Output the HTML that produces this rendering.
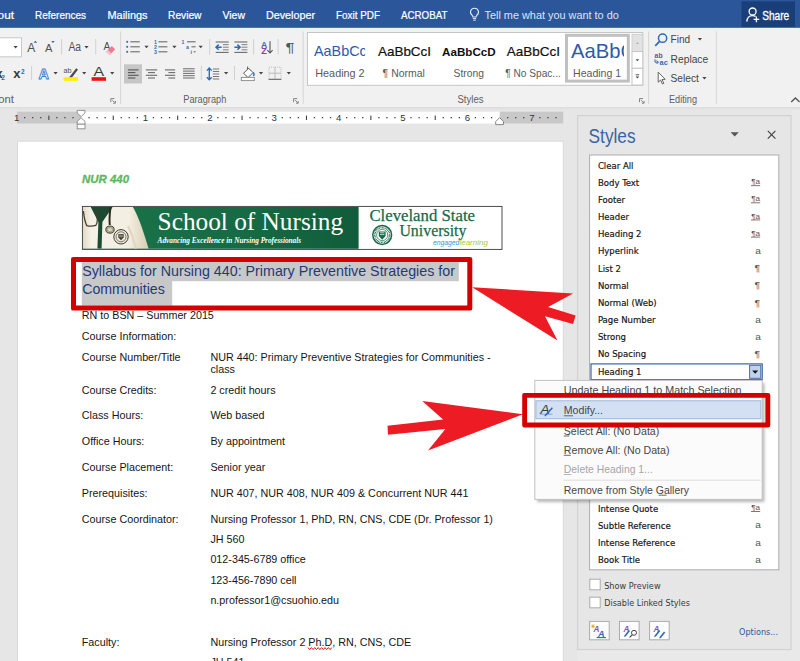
<!DOCTYPE html>
<html><head><meta charset="utf-8"><title>Word - Styles pane</title>
<style>
html,body{margin:0;padding:0;width:800px;height:661px;overflow:hidden;background:#e6e6e6}
svg{display:block;font-family:"Liberation Sans",sans-serif}
text{white-space:pre}
</style></head><body>
<svg width="800" height="661" viewBox="0 0 800 661">
<rect x="0.00" y="0.00" width="800.00" height="661.00" fill="#e6e6e6"/>
<rect x="0.00" y="0.00" width="800.00" height="27.90" fill="#2b579a"/>
<text x="-21.50" y="18.60" font-size="11.5" fill="#fff" textLength="35.50" lengthAdjust="spacingAndGlyphs" stroke="#fff" stroke-width="0.22">Layout</text>
<text x="35.00" y="18.60" font-size="11.5" fill="#fff" textLength="51.00" lengthAdjust="spacingAndGlyphs" stroke="#fff" stroke-width="0.22">References</text>
<text x="107.50" y="18.60" font-size="11.5" fill="#fff" textLength="40.00" lengthAdjust="spacingAndGlyphs" stroke="#fff" stroke-width="0.22">Mailings</text>
<text x="168.00" y="18.60" font-size="11.5" fill="#fff" textLength="33.50" lengthAdjust="spacingAndGlyphs" stroke="#fff" stroke-width="0.22">Review</text>
<text x="222.50" y="18.60" font-size="11.5" fill="#fff" textLength="22.50" lengthAdjust="spacingAndGlyphs" stroke="#fff" stroke-width="0.22">View</text>
<text x="266.00" y="18.60" font-size="11.5" fill="#fff" textLength="49.00" lengthAdjust="spacingAndGlyphs" stroke="#fff" stroke-width="0.22">Developer</text>
<text x="336.00" y="18.60" font-size="11.5" fill="#fff" textLength="44.00" lengthAdjust="spacingAndGlyphs" stroke="#fff" stroke-width="0.22">Foxit PDF</text>
<text x="401.00" y="18.60" font-size="11.5" fill="#fff" textLength="46.50" lengthAdjust="spacingAndGlyphs" stroke="#fff" stroke-width="0.22">ACROBAT</text>
<text x="484.50" y="18.70" font-size="11.5" fill="#dce5f3" textLength="134.30" lengthAdjust="spacingAndGlyphs">Tell me what you want to do</text>
<path d="M474.5 8.2a3.9 3.9 0 0 0-2.3 7.1c.5.5.7 1 .7 1.7h3.2c0-.7.2-1.2.7-1.7a3.9 3.9 0 0 0-2.3-7.1z" fill="none" stroke="#e6ecf6" stroke-width="1.1"/>
<path d="M472.9 18.6h3.2M473.3 20.2h2.4" fill="none" stroke="#e6ecf6" stroke-width="1"/>
<rect x="741.50" y="1.40" width="53.50" height="25.60" fill="#1a3f78"/>
<text x="762.20" y="20.20" font-size="12" fill="#fff" textLength="27.00" lengthAdjust="spacingAndGlyphs" stroke="#fff" stroke-width="0.3">Share</text>
<circle cx="752.6" cy="11.5" r="3.5" fill="none" stroke="#fff" stroke-width="1.3"/>
<path d="M746.8 21.6c.4-4 2.6-6 5.6-6 1.4 0 2.4.4 3.2 1" fill="none" stroke="#fff" stroke-width="1.3"/>
<path d="M756.4 16.6v5.6M753.6 19.4h5.6" fill="none" stroke="#fff" stroke-width="1.3"/>
<rect x="0.00" y="27.90" width="800.00" height="79.10" fill="#f1f1f1"/>
<linearGradient id="rs" x1="0" y1="0" x2="0" y2="1"><stop offset="0" stop-color="#dcdcdc"/><stop offset="1" stop-color="#e6e6e6"/></linearGradient>
<rect x="0.00" y="107.00" width="800.00" height="3.00" fill="url(#rs)"/>
<text x="-8.50" y="103.00" font-size="10" fill="#5f5f5f" textLength="22.50" lengthAdjust="spacingAndGlyphs">Font</text>
<text x="183.30" y="103.00" font-size="10" fill="#5f5f5f" textLength="43.00" lengthAdjust="spacingAndGlyphs">Paragraph</text>
<text x="457.50" y="103.00" font-size="10" fill="#5f5f5f" textLength="26.00" lengthAdjust="spacingAndGlyphs">Styles</text>
<text x="669.00" y="103.40" font-size="10" fill="#5f5f5f" textLength="28.00" lengthAdjust="spacingAndGlyphs">Editing</text>
<rect x="120.10" y="31.50" width="1.00" height="72.50" fill="#d6d6d6"/>
<rect x="302.70" y="31.50" width="1.00" height="72.50" fill="#d6d6d6"/>
<rect x="648.10" y="31.50" width="1.00" height="72.50" fill="#d6d6d6"/>
<rect x="715.90" y="31.50" width="1.00" height="72.50" fill="#d6d6d6"/>
<path d="M110.8 102.2v-3.6h3.6" fill="none" stroke="#777" stroke-width="0.9"/>
<path d="M112.4 100.2l2.6 2.6M115.4 101.0v2.2h-2.2" fill="none" stroke="#777" stroke-width="0.9"/>
<path d="M293.6 102.2v-3.6h3.6" fill="none" stroke="#777" stroke-width="0.9"/>
<path d="M295.2 100.2l2.6 2.6M298.2 101.0v2.2h-2.2" fill="none" stroke="#777" stroke-width="0.9"/>
<path d="M639.5 102.2v-3.6h3.6" fill="none" stroke="#777" stroke-width="0.9"/>
<path d="M641.1 100.2l2.6 2.6M644.1 101.0v2.2h-2.2" fill="none" stroke="#777" stroke-width="0.9"/>
<path d="M791.2 102l4.2-4 4.2 4" fill="none" stroke="#555" stroke-width="1.4"/>
<rect x="-2.00" y="37.80" width="23.50" height="19.00" fill="#fff" stroke="#c8c8c8" stroke-width="1"/>
<path d="M13.50 46.00h4.20l-2.10 2.40z" fill="#444"/>
<text x="27.30" y="51.50" font-size="12" fill="#505050" textLength="8.00" lengthAdjust="spacingAndGlyphs">A</text>
<path d="M33.6 42.8l1.8-2 1.8 2z" fill="#2e6bb5"/>
<text x="45.00" y="51.70" font-size="10.5" fill="#505050" textLength="7.40" lengthAdjust="spacingAndGlyphs">A</text>
<path d="M51.2 41l1.8 2 1.8-2z" fill="#2e6bb5"/>
<rect x="61.10" y="39.00" width="1.00" height="15.50" fill="#d0d0d0"/>
<rect x="95.20" y="39.00" width="1.00" height="15.50" fill="#d0d0d0"/>
<text x="68.50" y="51.20" font-size="12" fill="#505050" textLength="12.60" lengthAdjust="spacingAndGlyphs">Aa</text>
<path d="M84.40 46.00h4.20l-2.10 2.40z" fill="#444"/>
<text x="103.60" y="49.60" font-size="10.5" fill="#505050" textLength="6.80" lengthAdjust="spacingAndGlyphs">A</text>
<path d="M106.2 51.8l5.6-5.8 3.4 3.2-5.6 5.8z" fill="#ee7b91"/>
<path d="M106.2 51.8l1.6-1.7 3.4 3.2-1.6 1.7z" fill="#f8c3cd"/>
<text x="-4.40" y="77.80" font-size="12.5" fill="#3a3a3a" font-weight="bold" textLength="7.20" lengthAdjust="spacingAndGlyphs">x</text>
<text x="1.20" y="79.80" font-size="6.5" fill="#2e6bb5" font-weight="bold">2</text>
<text x="13.30" y="77.80" font-size="12.5" fill="#3a3a3a" font-weight="bold" textLength="7.20" lengthAdjust="spacingAndGlyphs">x</text>
<text x="21.00" y="74.00" font-size="6.5" fill="#2e6bb5" font-weight="bold">2</text>
<rect x="31.10" y="66.00" width="1.00" height="14.00" fill="#d0d0d0"/>
<text x="38.60" y="79.20" font-size="15.5" fill="#fff" font-weight="bold" textLength="10.40" lengthAdjust="spacingAndGlyphs" stroke="#3f7fd0" stroke-width="1" stroke-linejoin="round">A</text>
<path d="M53.50 72.10h4.20l-2.10 2.40z" fill="#444"/>
<text x="63.50" y="73.20" font-size="8" fill="#505050" textLength="8.00" lengthAdjust="spacingAndGlyphs">ab</text>
<path d="M69.8 76.6l6.4-8.4 1.8 1.3-6.2 8.3-2.6 .6z" fill="#4a4a4a"/>
<rect x="63.60" y="77.20" width="14.40" height="3.60" fill="#ffee00"/>
<path d="M82.10 72.10h4.20l-2.10 2.40z" fill="#444"/>
<text x="93.40" y="75.70" font-size="12.5" fill="#3a3a3a" textLength="10.60" lengthAdjust="spacingAndGlyphs">A</text>
<rect x="91.60" y="77.20" width="14.40" height="3.60" fill="#ee1111"/>
<path d="M110.10 72.10h4.20l-2.10 2.40z" fill="#444"/>
<rect x="126.30" y="40.90" width="1.80" height="1.80" fill="#2e6bb5"/>
<path d="M130.30 41.80H139.80" fill="none" stroke="#6a6a6a" stroke-width="1.1"/>
<text x="153.90" y="43.90" font-size="5.2" fill="#2e6bb5" font-weight="bold">1</text>
<path d="M158.40 41.80H167.40" fill="none" stroke="#6a6a6a" stroke-width="1.1"/>
<rect x="126.30" y="45.90" width="1.80" height="1.80" fill="#2e6bb5"/>
<path d="M130.30 46.80H139.80" fill="none" stroke="#6a6a6a" stroke-width="1.1"/>
<text x="153.90" y="48.90" font-size="5.2" fill="#2e6bb5" font-weight="bold">2</text>
<path d="M158.40 46.80H167.40" fill="none" stroke="#6a6a6a" stroke-width="1.1"/>
<rect x="126.30" y="50.90" width="1.80" height="1.80" fill="#2e6bb5"/>
<path d="M130.30 51.80H139.80" fill="none" stroke="#6a6a6a" stroke-width="1.1"/>
<text x="153.90" y="53.90" font-size="5.2" fill="#2e6bb5" font-weight="bold">3</text>
<path d="M158.40 51.80H167.40" fill="none" stroke="#6a6a6a" stroke-width="1.1"/>
<path d="M144.40 45.80h4.20l-2.10 2.40z" fill="#444"/>
<path d="M172.30 45.80h4.20l-2.10 2.40z" fill="#444"/>
<path d="M198.60 45.80h4.20l-2.10 2.40z" fill="#444"/>
<text x="181.60" y="43.60" font-size="5.2" fill="#2e6bb5" font-weight="bold">1</text>
<path d="M187.00 41.80H195.60" fill="none" stroke="#6a6a6a" stroke-width="1.1"/>
<text x="186.00" y="48.80" font-size="5.2" fill="#2e6bb5" font-weight="bold">a</text>
<path d="M191.50 46.80H195.60" fill="none" stroke="#6a6a6a" stroke-width="1.1"/>
<text x="190.40" y="53.60" font-size="5.2" fill="#2e6bb5" font-weight="bold">i</text>
<path d="M193.60 51.80H195.60" fill="none" stroke="#6a6a6a" stroke-width="1.1"/>
<rect x="209.20" y="39.00" width="1.00" height="15.50" fill="#d0d0d0"/>
<path d="M215.70 42.00H228.70" fill="none" stroke="#6a6a6a" stroke-width="1.1"/>
<path d="M222.90 44.60H228.70" fill="none" stroke="#8a8a8a" stroke-width="1.1"/>
<path d="M222.90 47.20H228.70" fill="none" stroke="#8a8a8a" stroke-width="1.1"/>
<path d="M222.90 49.80H228.70" fill="none" stroke="#8a8a8a" stroke-width="1.1"/>
<path d="M215.70 52.40H228.70" fill="none" stroke="#6a6a6a" stroke-width="1.1"/>
<path d="M221.7 47.2h-5.6M218.7 44.6l-2.7 2.6 2.7 2.6" fill="none" stroke="#2e6bb5" stroke-width="1.5"/>
<path d="M234.40 42.00H247.40" fill="none" stroke="#6a6a6a" stroke-width="1.1"/>
<path d="M241.60 44.60H247.40" fill="none" stroke="#8a8a8a" stroke-width="1.1"/>
<path d="M241.60 47.20H247.40" fill="none" stroke="#8a8a8a" stroke-width="1.1"/>
<path d="M241.60 49.80H247.40" fill="none" stroke="#8a8a8a" stroke-width="1.1"/>
<path d="M234.40 52.40H247.40" fill="none" stroke="#6a6a6a" stroke-width="1.1"/>
<path d="M234.4 47.2h5.6M237.4 44.6l2.7 2.6-2.7 2.6" fill="none" stroke="#2e6bb5" stroke-width="1.5"/>
<rect x="253.10" y="39.00" width="1.00" height="15.50" fill="#d0d0d0"/>
<text x="261.00" y="47.50" font-size="8.2" fill="#2e6bb5" font-weight="bold" textLength="6.20" lengthAdjust="spacingAndGlyphs">A</text>
<text x="261.20" y="53.80" font-size="8.2" fill="#8a3fa8" font-weight="bold" textLength="5.60" lengthAdjust="spacingAndGlyphs">Z</text>
<path d="M270 41.2v11.6M267.4 50.2l2.6 2.8 2.6-2.8" fill="none" stroke="#555" stroke-width="1.1"/>
<rect x="277.60" y="39.00" width="1.00" height="15.50" fill="#d0d0d0"/>
<text x="285.60" y="52.20" font-size="13" fill="#555" textLength="9.00" lengthAdjust="spacingAndGlyphs">¶</text>
<rect x="124.00" y="64.30" width="18.00" height="19.20" fill="#c6c6c6"/>
<path d="M128.00 69.90H138.60" fill="none" stroke="#555" stroke-width="1.1"/>
<path d="M145.80 69.90H157.20" fill="none" stroke="#6a6a6a" stroke-width="1.1"/>
<path d="M165.00 69.90H175.20" fill="none" stroke="#6a6a6a" stroke-width="1.1"/>
<path d="M128.00 72.60H135.40" fill="none" stroke="#555" stroke-width="1.1"/>
<path d="M148.00 72.60H155.00" fill="none" stroke="#6a6a6a" stroke-width="1.1"/>
<path d="M168.40 72.60H175.20" fill="none" stroke="#6a6a6a" stroke-width="1.1"/>
<path d="M128.00 75.30H138.60" fill="none" stroke="#555" stroke-width="1.1"/>
<path d="M145.80 75.30H157.20" fill="none" stroke="#6a6a6a" stroke-width="1.1"/>
<path d="M165.00 75.30H175.20" fill="none" stroke="#6a6a6a" stroke-width="1.1"/>
<path d="M128.00 78.00H135.40" fill="none" stroke="#555" stroke-width="1.1"/>
<path d="M148.00 78.00H155.00" fill="none" stroke="#6a6a6a" stroke-width="1.1"/>
<path d="M168.40 78.00H175.20" fill="none" stroke="#6a6a6a" stroke-width="1.1"/>
<path d="M183.00 68.80H194.70" fill="none" stroke="#6a6a6a" stroke-width="1"/>
<path d="M183.00 71.10H194.70" fill="none" stroke="#6a6a6a" stroke-width="1"/>
<path d="M183.00 73.40H194.70" fill="none" stroke="#6a6a6a" stroke-width="1"/>
<path d="M183.00 75.70H194.70" fill="none" stroke="#6a6a6a" stroke-width="1"/>
<path d="M183.00 78.00H194.70" fill="none" stroke="#6a6a6a" stroke-width="1"/>
<rect x="200.80" y="66.00" width="1.00" height="14.00" fill="#d0d0d0"/>
<path d="M209.3 68.2v11.4M206.9 70.6l2.4-2.6 2.4 2.6M206.9 77.2l2.4 2.6 2.4-2.6" fill="none" stroke="#2e6bb5" stroke-width="1.4"/>
<path d="M212.80 69.00H219.20" fill="none" stroke="#777" stroke-width="1"/>
<path d="M212.80 71.50H219.20" fill="none" stroke="#777" stroke-width="1"/>
<path d="M212.80 74.00H219.20" fill="none" stroke="#777" stroke-width="1"/>
<path d="M212.80 76.50H219.20" fill="none" stroke="#777" stroke-width="1"/>
<path d="M212.80 79.00H219.20" fill="none" stroke="#777" stroke-width="1"/>
<path d="M224.00 72.10h4.20l-2.10 2.40z" fill="#444"/>
<rect x="234.00" y="66.00" width="1.00" height="14.00" fill="#d0d0d0"/>
<path d="M243.6 73.2l5-5 4.4 4.4-5 5z" fill="#fff" stroke="#555" stroke-width="1"/>
<path d="M247.6 69.2v-2.6" fill="none" stroke="#555" stroke-width="1"/>
<path d="M253.2 72.4c1 1.4 1.2 2.6.2 3.6" fill="none" stroke="#2e6bb5" stroke-width="1.4"/>
<rect x="241.30" y="77.40" width="13.00" height="3.20" fill="#fff" stroke="#8a8a8a" stroke-width="0.9"/>
<path d="M258.90 72.10h4.20l-2.10 2.40z" fill="#444"/>
<rect x="269.00" y="67.20" width="12.00" height="12.00" fill="none" stroke="#b5b5b5" stroke-width="0.9" stroke-dasharray="1 1"/>
<path d="M275 67.2v12M269 73.2h12" fill="none" stroke="#b5b5b5" stroke-width="0.9"/>
<path d="M268.60 79.40H281.40" fill="none" stroke="#777" stroke-width="1.2"/>
<path d="M286.70 72.10h4.20l-2.10 2.40z" fill="#444"/>
<rect x="307.50" y="32.50" width="335.20" height="52.80" fill="#fff" stroke="#c6c6c6" stroke-width="1"/>
<clipPath id="c1"><rect x="310" y="34" width="55.2" height="30"/></clipPath>
<text x="314.00" y="56.20" font-size="14.4" fill="#2e5ba8" clip-path="url(#c1)">AaBbCc</text>
<text x="315.30" y="77.00" font-size="11" fill="#5a5a5a" textLength="49.30" lengthAdjust="spacingAndGlyphs">Heading 2</text>
<text x="378.00" y="56.20" font-size="12.7" fill="#111" textLength="53.00" lengthAdjust="spacingAndGlyphs" stroke="#111" stroke-width="0.2">AaBbCcI</text>
<text x="382.60" y="77.00" font-size="11" fill="#5a5a5a" textLength="42.30" lengthAdjust="spacingAndGlyphs">¶ Normal</text>
<text x="442.10" y="56.20" font-size="11.6" fill="#111" font-weight="bold" textLength="53.50" lengthAdjust="spacingAndGlyphs">AaBbCcD</text>
<text x="453.60" y="77.00" font-size="11" fill="#5a5a5a" textLength="30.40" lengthAdjust="spacingAndGlyphs">Strong</text>
<text x="506.80" y="56.20" font-size="12.7" fill="#111" textLength="53.20" lengthAdjust="spacingAndGlyphs" stroke="#111" stroke-width="0.2">AaBbCcI</text>
<text x="505.30" y="77.00" font-size="11" fill="#5a5a5a" textLength="55.50" lengthAdjust="spacingAndGlyphs">¶ No Spac...</text>
<rect x="566.50" y="35.30" width="61.80" height="45.80" fill="#fff" stroke="#c0c0c0" stroke-width="3"/>
<clipPath id="c2"><rect x="568" y="36" width="56" height="30"/></clipPath>
<text x="571.00" y="58.30" font-size="20.2" fill="#2e5ba8" clip-path="url(#c2)">AaBbC</text>
<text x="573.00" y="77.00" font-size="11" fill="#5a5a5a" textLength="48.20" lengthAdjust="spacingAndGlyphs">Heading 1</text>
<rect x="632.00" y="34.30" width="10.80" height="17.30" fill="#e2e2e2" stroke="#d0d0d0" stroke-width="1"/>
<rect x="632.00" y="51.60" width="10.80" height="16.70" fill="#fff" stroke="#c6c6c6" stroke-width="1"/>
<rect x="632.00" y="68.30" width="10.80" height="16.70" fill="#fff" stroke="#c6c6c6" stroke-width="1"/>
<path d="M635.70 44.00h3.40l-1.70 -2.00z" fill="#b5b5b5"/>
<path d="M635.70 59.20h3.40l-1.70 2.00z" fill="#444"/>
<path d="M635.60 74.80H639.20" fill="none" stroke="#444" stroke-width="0.9"/>
<path d="M635.70 76.60h3.40l-1.70 2.00z" fill="#444"/>
<circle cx="662.6" cy="38.2" r="4.1" fill="none" stroke="#2e6bb5" stroke-width="1.5"/>
<path d="M659.6 41.4l-4.4 4.4" fill="none" stroke="#2e6bb5" stroke-width="1.7"/>
<text x="670.60" y="43.40" font-size="11.5" fill="#444" textLength="19.60" lengthAdjust="spacingAndGlyphs">Find</text>
<path d="M697.80 38.00h4.20l-2.10 2.40z" fill="#444"/>
<text x="654.60" y="57.60" font-size="7.4" fill="#8a3fa8" font-weight="bold" textLength="8.00" lengthAdjust="spacingAndGlyphs">ab</text>
<text x="659.60" y="65.00" font-size="7.4" fill="#2e6bb5" font-weight="bold" textLength="8.20" lengthAdjust="spacingAndGlyphs">ac</text>
<path d="M655 59.4v2.8h3.2M656.6 60.4l1.8 1.8-1.8 1.8" fill="none" stroke="#2e6bb5" stroke-width="1"/>
<text x="670.60" y="63.00" font-size="11.5" fill="#444" textLength="37.60" lengthAdjust="spacingAndGlyphs">Replace</text>
<path d="M658.2 72.2v10l2.4-2.2 1.8 4 1.4-.6-1.8-3.9 3.2-.2z" fill="#fff" stroke="#555" stroke-width="0.9"/>
<text x="670.60" y="82.20" font-size="11.5" fill="#444" textLength="28.20" lengthAdjust="spacingAndGlyphs">Select</text>
<path d="M702.30 77.00h4.20l-2.10 2.40z" fill="#444"/>
<rect x="17.00" y="111.70" width="64.00" height="11.80" fill="#c8c8c8"/>
<rect x="81.00" y="111.70" width="418.80" height="11.80" fill="#fff"/>
<rect x="499.80" y="111.70" width="63.40" height="11.80" fill="#c8c8c8"/>
<rect x="24.00" y="117.00" width="1.30" height="1.30" fill="#444"/>
<rect x="32.05" y="117.00" width="1.30" height="1.30" fill="#444"/>
<rect x="40.10" y="117.00" width="1.30" height="1.30" fill="#444"/>
<rect x="48.30" y="115.60" width="1.10" height="4.40" fill="#444"/>
<rect x="56.20" y="117.00" width="1.30" height="1.30" fill="#444"/>
<rect x="64.25" y="117.00" width="1.30" height="1.30" fill="#444"/>
<rect x="72.30" y="117.00" width="1.30" height="1.30" fill="#444"/>
<rect x="88.40" y="117.00" width="1.30" height="1.30" fill="#444"/>
<rect x="96.45" y="117.00" width="1.30" height="1.30" fill="#444"/>
<rect x="104.50" y="117.00" width="1.30" height="1.30" fill="#444"/>
<rect x="112.70" y="115.60" width="1.10" height="4.40" fill="#444"/>
<rect x="120.60" y="117.00" width="1.30" height="1.30" fill="#444"/>
<rect x="128.65" y="117.00" width="1.30" height="1.30" fill="#444"/>
<rect x="136.70" y="117.00" width="1.30" height="1.30" fill="#444"/>
<text x="145.40" y="121.20" font-size="9.6" fill="#333" text-anchor="middle">1</text>
<rect x="152.80" y="117.00" width="1.30" height="1.30" fill="#444"/>
<rect x="160.85" y="117.00" width="1.30" height="1.30" fill="#444"/>
<rect x="168.90" y="117.00" width="1.30" height="1.30" fill="#444"/>
<rect x="177.10" y="115.60" width="1.10" height="4.40" fill="#444"/>
<rect x="185.00" y="117.00" width="1.30" height="1.30" fill="#444"/>
<rect x="193.05" y="117.00" width="1.30" height="1.30" fill="#444"/>
<rect x="201.10" y="117.00" width="1.30" height="1.30" fill="#444"/>
<text x="209.80" y="121.20" font-size="9.6" fill="#333" text-anchor="middle">2</text>
<rect x="217.20" y="117.00" width="1.30" height="1.30" fill="#444"/>
<rect x="225.25" y="117.00" width="1.30" height="1.30" fill="#444"/>
<rect x="233.30" y="117.00" width="1.30" height="1.30" fill="#444"/>
<rect x="241.50" y="115.60" width="1.10" height="4.40" fill="#444"/>
<rect x="249.40" y="117.00" width="1.30" height="1.30" fill="#444"/>
<rect x="257.45" y="117.00" width="1.30" height="1.30" fill="#444"/>
<rect x="265.50" y="117.00" width="1.30" height="1.30" fill="#444"/>
<text x="274.20" y="121.20" font-size="9.6" fill="#333" text-anchor="middle">3</text>
<rect x="281.60" y="117.00" width="1.30" height="1.30" fill="#444"/>
<rect x="289.65" y="117.00" width="1.30" height="1.30" fill="#444"/>
<rect x="297.70" y="117.00" width="1.30" height="1.30" fill="#444"/>
<rect x="305.90" y="115.60" width="1.10" height="4.40" fill="#444"/>
<rect x="313.80" y="117.00" width="1.30" height="1.30" fill="#444"/>
<rect x="321.85" y="117.00" width="1.30" height="1.30" fill="#444"/>
<rect x="329.90" y="117.00" width="1.30" height="1.30" fill="#444"/>
<text x="338.60" y="121.20" font-size="9.6" fill="#333" text-anchor="middle">4</text>
<rect x="346.00" y="117.00" width="1.30" height="1.30" fill="#444"/>
<rect x="354.05" y="117.00" width="1.30" height="1.30" fill="#444"/>
<rect x="362.10" y="117.00" width="1.30" height="1.30" fill="#444"/>
<rect x="370.30" y="115.60" width="1.10" height="4.40" fill="#444"/>
<rect x="378.20" y="117.00" width="1.30" height="1.30" fill="#444"/>
<rect x="386.25" y="117.00" width="1.30" height="1.30" fill="#444"/>
<rect x="394.30" y="117.00" width="1.30" height="1.30" fill="#444"/>
<text x="403.00" y="121.20" font-size="9.6" fill="#333" text-anchor="middle">5</text>
<rect x="410.40" y="117.00" width="1.30" height="1.30" fill="#444"/>
<rect x="418.45" y="117.00" width="1.30" height="1.30" fill="#444"/>
<rect x="426.50" y="117.00" width="1.30" height="1.30" fill="#444"/>
<rect x="434.70" y="115.60" width="1.10" height="4.40" fill="#444"/>
<rect x="442.60" y="117.00" width="1.30" height="1.30" fill="#444"/>
<rect x="450.65" y="117.00" width="1.30" height="1.30" fill="#444"/>
<rect x="458.70" y="117.00" width="1.30" height="1.30" fill="#444"/>
<text x="467.40" y="121.20" font-size="9.6" fill="#333" text-anchor="middle">6</text>
<rect x="474.80" y="117.00" width="1.30" height="1.30" fill="#444"/>
<rect x="482.85" y="117.00" width="1.30" height="1.30" fill="#444"/>
<rect x="490.90" y="117.00" width="1.30" height="1.30" fill="#444"/>
<rect x="507.00" y="117.00" width="1.30" height="1.30" fill="#444"/>
<rect x="515.05" y="117.00" width="1.30" height="1.30" fill="#444"/>
<rect x="523.10" y="117.00" width="1.30" height="1.30" fill="#444"/>
<text x="531.80" y="121.20" font-size="9.6" fill="#333" text-anchor="middle">7</text>
<rect x="539.20" y="117.00" width="1.30" height="1.30" fill="#444"/>
<rect x="547.25" y="117.00" width="1.30" height="1.30" fill="#444"/>
<rect x="555.30" y="117.00" width="1.30" height="1.30" fill="#444"/>
<text x="16.60" y="121.20" font-size="9.6" fill="#333" text-anchor="middle">1</text>
<path d="M77.2 110.4h7.8v2.6l-3.9 3.6-3.9-3.6z" fill="#fff" stroke="#8a8a8a" stroke-width="0.9"/>
<path d="M77.2 124.2v-2.8l3.9-3.6 3.9 3.6v2.8z" fill="#fff" stroke="#8a8a8a" stroke-width="0.9"/>
<rect x="77.20" y="124.20" width="7.80" height="4.60" fill="#fff" stroke="#8a8a8a" stroke-width="0.9"/>
<path d="M495.7 124.6v-3l3.9-4 3.9 4v3z" fill="#fff" stroke="#7a7a7a" stroke-width="0.9"/>
<rect x="17.60" y="141.20" width="545.60" height="530.00" fill="#fff" stroke="#d4d4d4" stroke-width="0.8"/>
<text x="82.00" y="182.60" font-size="11.6" fill="#5cb85c" font-weight="bold" font-style="italic" textLength="47.00" lengthAdjust="spacingAndGlyphs" stroke="#5cb85c" stroke-width="0.3">NUR 440</text>
<rect x="82.40" y="206.40" width="419.60" height="43.00" fill="#fff" stroke="#3a3a3a" stroke-width="0.9"/>
<linearGradient id="bg1" x1="0" y1="0" x2="1" y2="0"><stop offset="0" stop-color="#1b7349"/><stop offset="0.6" stop-color="#166a44"/><stop offset="1" stop-color="#115c3a"/></linearGradient>
<rect x="83.00" y="207.00" width="275.60" height="41.80" fill="url(#bg1)"/>
<clipPath id="cb"><rect x="83" y="207" width="275.6" height="41.8"/></clipPath>
<g clip-path="url(#cb)">
<linearGradient id="ct" x1="0" y1="0" x2="1" y2="0"><stop offset="0" stop-color="#e4dac6"/><stop offset="0.12" stop-color="#f5f1e7"/><stop offset="0.7" stop-color="#f4efe3"/><stop offset="1" stop-color="#d8cbb0"/></linearGradient>
<path d="M83 207H132.9C137 214 141 224 144 234C146 240 147.6 245 148.6 248.8H83z" fill="url(#ct)"/>
<path d="M90.7 207H112.6L102.4 222L101.6 248.8H97.4L98.4 222z" fill="#1c4a33"/>
<path d="M128 226c3 6 6 14 8 22.8" fill="none" stroke="#e3d7c0" stroke-width="2.2"/>
<path d="M83.4 211c.6 6 1.6 11 3.4 14.6 3 .8 6.6 .6 9-.2 2-2.6 2-7 .6-13" fill="none" stroke="#4a3c2a" stroke-width="1.3"/>
<path d="M110.6 207c-1 6-1.4 12-.8 18" fill="none" stroke="#2e2a22" stroke-width="2"/>
<ellipse cx="110" cy="229.6" rx="4.2" ry="3.6" fill="#a9a58f" stroke="#4a4636" stroke-width="1"/>
<ellipse cx="110" cy="229.6" rx="2" ry="1.6" fill="#d9d6c6"/>
<circle cx="121" cy="236.8" r="7.2" fill="#efe9da" stroke="#3c3a30" stroke-width="1"/>
<circle cx="121" cy="236.8" r="5" fill="none" stroke="#4c4a3e" stroke-width="0.7"/>
<path d="M118.4 234h5.2v3.4l-2.6 2.8-2.6-2.8z" fill="#3c3a30"/>
<path d="M119.2 235.2h3.6M119.2 236.8h3.6" fill="none" stroke="#efe9da" stroke-width="0.6"/>
</g>
<text x="157.60" y="229.80" font-size="25.4" fill="#fff" font-family='"Liberation Serif",serif' textLength="185.50" lengthAdjust="spacingAndGlyphs">School of Nursing</text>
<text x="157.60" y="242.60" font-size="7.6" fill="#fff" font-family='"Liberation Serif",serif' font-weight="bold" font-style="italic" textLength="143.50" lengthAdjust="spacingAndGlyphs">Advancing Excellence in Nursing Professionals</text>
<text x="369.40" y="221.00" font-size="17.4" fill="#17694a" font-family='"Liberation Serif",serif' textLength="105.60" lengthAdjust="spacingAndGlyphs" stroke="#17694a" stroke-width="0.25">Cleveland State</text>
<text x="399.40" y="235.80" font-size="17.4" fill="#17694a" font-family='"Liberation Serif",serif' textLength="67.00" lengthAdjust="spacingAndGlyphs" stroke="#17694a" stroke-width="0.25">University</text>
<circle cx="382.2" cy="235" r="9.4" fill="#fff" stroke="#17694a" stroke-width="1.5"/>
<circle cx="382.2" cy="235" r="7.4" fill="none" stroke="#17694a" stroke-width="1.6" stroke-dasharray="0.8 0.7"/>
<circle cx="382.2" cy="235" r="5.6" fill="none" stroke="#17694a" stroke-width="0.7"/>
<path d="M378.8 231.4h6.8v4.6l-3.4 3.8-3.4-3.8z" fill="#17694a"/>
<path d="M380 232.8h4.4M380 234.6h4.4" fill="none" stroke="#fff" stroke-width="0.7"/>
<text x="433.00" y="245.20" font-size="7.6" fill="#2e9bd6" font-style="italic" textLength="26.40" lengthAdjust="spacingAndGlyphs">engaged</text>
<text x="459.40" y="245.20" font-size="7.6" fill="#a9cb2e" font-style="italic" textLength="28.60" lengthAdjust="spacingAndGlyphs">learning</text>
<rect x="81.80" y="262.00" width="377.00" height="19.20" fill="#c8c8c8"/>
<rect x="81.80" y="281.00" width="90.40" height="24.60" fill="#c8c8c8"/>
<text x="82.20" y="276.20" font-size="14.3" fill="#1f3a78" textLength="372.80" lengthAdjust="spacingAndGlyphs">Syllabus for Nursing 440: Primary Preventive Strategies for</text>
<text x="82.20" y="294.20" font-size="14.3" fill="#1f3a78" textLength="82.60" lengthAdjust="spacingAndGlyphs">Communities</text>
<text x="81.80" y="319.30" font-size="10.76" fill="#161616">RN to BSN – Summer 2015</text>
<text x="81.80" y="340.00" font-size="10.76" fill="#161616">Course Information:</text>
<text x="81.80" y="360.70" font-size="10.76" fill="#161616">Course Number/Title</text>
<text x="210.40" y="360.70" font-size="10.76" fill="#161616">NUR 440: Primary Preventive Strategies for Communities -</text>
<text x="210.40" y="373.00" font-size="10.76" fill="#161616">class</text>
<text x="81.80" y="393.50" font-size="10.76" fill="#161616">Course Credits:</text>
<text x="210.40" y="393.50" font-size="10.76" fill="#161616">2 credit hours</text>
<text x="81.80" y="419.00" font-size="10.76" fill="#161616">Class Hours:</text>
<text x="210.40" y="419.00" font-size="10.76" fill="#161616">Web based</text>
<text x="81.80" y="445.00" font-size="10.76" fill="#161616">Office Hours:</text>
<text x="210.40" y="445.00" font-size="10.76" fill="#161616">By appointment</text>
<text x="81.80" y="471.00" font-size="10.76" fill="#161616">Course Placement:</text>
<text x="210.40" y="471.00" font-size="10.76" fill="#161616">Senior year</text>
<text x="81.80" y="496.70" font-size="10.76" fill="#161616">Prerequisites:</text>
<text x="210.40" y="496.70" font-size="10.76" fill="#161616">NUR 407, NUR 408, NUR 409 &amp; Concurrent NUR 441</text>
<text x="81.80" y="522.50" font-size="10.76" fill="#161616">Course Coordinator:</text>
<text x="210.40" y="522.50" font-size="10.76" fill="#161616">Nursing Professor 1, PhD, RN, CNS, CDE (Dr. Professor 1)</text>
<text x="210.40" y="543.00" font-size="10.76" fill="#161616">JH 560</text>
<text x="210.40" y="563.20" font-size="10.76" fill="#161616">012-345-6789 office</text>
<text x="210.40" y="584.00" font-size="10.76" fill="#161616">123-456-7890 cell</text>
<text x="210.40" y="604.40" font-size="10.76" fill="#161616">n.professor1@csuohio.edu</text>
<text x="81.80" y="646.00" font-size="10.76" fill="#161616">Faculty:</text>
<text x="210.40" y="646.00" font-size="10.76" fill="#161616">Nursing Professor 2 Ph.D, RN, CNS, CDE</text>
<text x="210.40" y="666.00" font-size="10.76" fill="#161616">JH 541</text>
<path d="M308.0 647.6l1.7 2l1.7 -2l1.7 2l1.7 -2l1.7 2l1.7 -2l1.7 2l1.7 -2l1.7 2l1.7 -2l1.7 2l1.7 -2l1.7 2l1.7 -2" fill="none" stroke="#d11" stroke-width="1"/>
<rect x="577.60" y="115.60" width="213.40" height="534.00" fill="#e6e6e6" stroke="#d2d2d2" stroke-width="1.3"/>
<rect x="791.80" y="110.00" width="8.20" height="551.00" fill="#e9e9e9"/>
<rect x="577.00" y="650.40" width="215.00" height="11.00" fill="#e9e9e9"/>
<text x="588.60" y="142.60" font-size="19.6" fill="#3a64a6" textLength="47.00" lengthAdjust="spacingAndGlyphs">Styles</text>
<path d="M730.60 132.30h8.20l-4.10 4.20z" fill="#555"/>
<path d="M767.8 130.8l7.6 7.8M775.4 130.8l-7.6 7.8" fill="none" stroke="#444" stroke-width="1.2"/>
<rect x="589.60" y="155.00" width="189.20" height="414.80" fill="#fff" stroke="#adadad" stroke-width="1"/>
<text x="597.90" y="168.70" font-size="9.3" fill="#161616" font-family='"DejaVu Sans Condensed","DejaVu Sans","Liberation Sans",sans-serif' textLength="35.61" lengthAdjust="spacingAndGlyphs" stroke="#161616" stroke-width="0.18">Clear All</text>
<text x="597.90" y="185.85" font-size="9.3" fill="#161616" font-family='"DejaVu Sans Condensed","DejaVu Sans","Liberation Sans",sans-serif' textLength="41.33" lengthAdjust="spacingAndGlyphs" stroke="#161616" stroke-width="0.18">Body Text</text>
<text x="751.20" y="184.25" font-size="7.8" fill="#555" textLength="8.80" lengthAdjust="spacingAndGlyphs">¶a</text>
<path d="M751.00 185.65H760.20" fill="none" stroke="#555" stroke-width="0.8"/>
<text x="597.90" y="203.00" font-size="9.3" fill="#161616" font-family='"DejaVu Sans Condensed","DejaVu Sans","Liberation Sans",sans-serif' textLength="27.12" lengthAdjust="spacingAndGlyphs" stroke="#161616" stroke-width="0.18">Footer</text>
<text x="751.20" y="201.40" font-size="7.8" fill="#555" textLength="8.80" lengthAdjust="spacingAndGlyphs">¶a</text>
<path d="M751.00 202.80H760.20" fill="none" stroke="#555" stroke-width="0.8"/>
<text x="597.90" y="220.15" font-size="9.3" fill="#161616" font-family='"DejaVu Sans Condensed","DejaVu Sans","Liberation Sans",sans-serif' textLength="31.08" lengthAdjust="spacingAndGlyphs" stroke="#161616" stroke-width="0.18">Header</text>
<text x="751.20" y="218.55" font-size="7.8" fill="#555" textLength="8.80" lengthAdjust="spacingAndGlyphs">¶a</text>
<path d="M751.00 219.95H760.20" fill="none" stroke="#555" stroke-width="0.8"/>
<text x="597.90" y="237.30" font-size="9.3" fill="#161616" font-family='"DejaVu Sans Condensed","DejaVu Sans","Liberation Sans",sans-serif' textLength="43.66" lengthAdjust="spacingAndGlyphs" stroke="#161616" stroke-width="0.18">Heading 2</text>
<text x="751.20" y="235.70" font-size="7.8" fill="#555" textLength="8.80" lengthAdjust="spacingAndGlyphs">¶a</text>
<path d="M751.00 237.10H760.20" fill="none" stroke="#555" stroke-width="0.8"/>
<text x="597.90" y="254.45" font-size="9.3" fill="#161616" font-family='"DejaVu Sans Condensed","DejaVu Sans","Liberation Sans",sans-serif' textLength="40.74" lengthAdjust="spacingAndGlyphs" stroke="#161616" stroke-width="0.18">Hyperlink</text>
<text x="755.20" y="254.05" font-size="9.8" fill="#555" textLength="5.60" lengthAdjust="spacingAndGlyphs">a</text>
<text x="597.90" y="271.60" font-size="9.3" fill="#161616" font-family='"DejaVu Sans Condensed","DejaVu Sans","Liberation Sans",sans-serif' textLength="23.05" lengthAdjust="spacingAndGlyphs" stroke="#161616" stroke-width="0.18">List 2</text>
<text x="754.60" y="271.20" font-size="9.6" fill="#555" textLength="5.60" lengthAdjust="spacingAndGlyphs">¶</text>
<text x="597.90" y="288.75" font-size="9.3" fill="#161616" font-family='"DejaVu Sans Condensed","DejaVu Sans","Liberation Sans",sans-serif' textLength="30.86" lengthAdjust="spacingAndGlyphs" stroke="#161616" stroke-width="0.18">Normal</text>
<text x="754.60" y="288.35" font-size="9.6" fill="#555" textLength="5.60" lengthAdjust="spacingAndGlyphs">¶</text>
<text x="597.90" y="305.90" font-size="9.3" fill="#161616" font-family='"DejaVu Sans Condensed","DejaVu Sans","Liberation Sans",sans-serif' textLength="58.78" lengthAdjust="spacingAndGlyphs" stroke="#161616" stroke-width="0.18">Normal (Web)</text>
<text x="754.60" y="305.50" font-size="9.6" fill="#555" textLength="5.60" lengthAdjust="spacingAndGlyphs">¶</text>
<text x="597.90" y="323.05" font-size="9.3" fill="#161616" font-family='"DejaVu Sans Condensed","DejaVu Sans","Liberation Sans",sans-serif' textLength="57.62" lengthAdjust="spacingAndGlyphs" stroke="#161616" stroke-width="0.18">Page Number</text>
<text x="755.20" y="322.65" font-size="9.8" fill="#555" textLength="5.60" lengthAdjust="spacingAndGlyphs">a</text>
<text x="597.90" y="340.20" font-size="9.3" fill="#161616" font-family='"DejaVu Sans Condensed","DejaVu Sans","Liberation Sans",sans-serif' textLength="28.11" lengthAdjust="spacingAndGlyphs" stroke="#161616" stroke-width="0.18">Strong</text>
<text x="755.20" y="339.80" font-size="9.8" fill="#555" textLength="5.60" lengthAdjust="spacingAndGlyphs">a</text>
<text x="597.90" y="357.35" font-size="9.3" fill="#161616" font-family='"DejaVu Sans Condensed","DejaVu Sans","Liberation Sans",sans-serif' textLength="48.27" lengthAdjust="spacingAndGlyphs" stroke="#161616" stroke-width="0.18">No Spacing</text>
<text x="754.60" y="356.95" font-size="9.6" fill="#555" textLength="5.60" lengthAdjust="spacingAndGlyphs">¶</text>
<rect x="591.00" y="363.90" width="171.20" height="15.80" fill="#fff" stroke="#2b579a" stroke-width="1.1"/>
<rect x="749.60" y="365.30" width="11.20" height="13.00" fill="#bfd2ee" stroke="#4a6aa8" stroke-width="1"/>
<path d="M752.20 370.40h6.00l-3.00 3.40z" fill="#111"/>
<text x="597.90" y="374.50" font-size="9.3" fill="#161616" font-family='"DejaVu Sans Condensed","DejaVu Sans","Liberation Sans",sans-serif' textLength="43.66" lengthAdjust="spacingAndGlyphs" stroke="#161616" stroke-width="0.18">Heading 1</text>
<text x="597.90" y="511.70" font-size="9.3" fill="#161616" font-family='"DejaVu Sans Condensed","DejaVu Sans","Liberation Sans",sans-serif' textLength="60.29" lengthAdjust="spacingAndGlyphs" stroke="#161616" stroke-width="0.18">Intense Quote</text>
<text x="751.20" y="510.10" font-size="7.8" fill="#555" textLength="8.80" lengthAdjust="spacingAndGlyphs">¶a</text>
<path d="M751.00 511.50H760.20" fill="none" stroke="#555" stroke-width="0.8"/>
<text x="597.90" y="528.85" font-size="9.3" fill="#161616" font-family='"DejaVu Sans Condensed","DejaVu Sans","Liberation Sans",sans-serif' textLength="72.84" lengthAdjust="spacingAndGlyphs" stroke="#161616" stroke-width="0.18">Subtle Reference</text>
<text x="755.20" y="528.45" font-size="9.8" fill="#555" textLength="5.60" lengthAdjust="spacingAndGlyphs">a</text>
<text x="597.90" y="546.00" font-size="9.3" fill="#161616" font-family='"DejaVu Sans Condensed","DejaVu Sans","Liberation Sans",sans-serif' textLength="77.26" lengthAdjust="spacingAndGlyphs" stroke="#161616" stroke-width="0.18">Intense Reference</text>
<text x="755.20" y="545.60" font-size="9.8" fill="#555" textLength="5.60" lengthAdjust="spacingAndGlyphs">a</text>
<text x="597.90" y="563.15" font-size="9.3" fill="#161616" font-family='"DejaVu Sans Condensed","DejaVu Sans","Liberation Sans",sans-serif' textLength="42.21" lengthAdjust="spacingAndGlyphs" stroke="#161616" stroke-width="0.18">Book Title</text>
<text x="755.20" y="562.75" font-size="9.8" fill="#555" textLength="5.60" lengthAdjust="spacingAndGlyphs">a</text>
<rect x="589.80" y="579.20" width="10.40" height="10.60" fill="#fff" stroke="#ababab" stroke-width="1"/>
<rect x="589.80" y="597.20" width="10.40" height="10.60" fill="#fff" stroke="#ababab" stroke-width="1"/>
<text x="604.20" y="588.60" font-size="9.2" fill="#3a3a3a" font-family='"DejaVu Sans Condensed","DejaVu Sans","Liberation Sans",sans-serif' textLength="56.40" lengthAdjust="spacingAndGlyphs">Show Preview</text>
<text x="604.20" y="606.40" font-size="9.2" fill="#3a3a3a" font-family='"DejaVu Sans Condensed","DejaVu Sans","Liberation Sans",sans-serif' textLength="85.80" lengthAdjust="spacingAndGlyphs">Disable Linked Styles</text>
<rect x="589.60" y="621.40" width="19.60" height="18.40" fill="#fdfdfd" stroke="#ababab" stroke-width="1"/>
<text x="593.60" y="632.00" font-size="8.6" fill="#8a4fc0" font-weight="bold" font-style="italic" textLength="6.00" lengthAdjust="spacingAndGlyphs">A</text>
<rect x="619.50" y="621.40" width="19.60" height="18.40" fill="#fdfdfd" stroke="#ababab" stroke-width="1"/>
<text x="623.50" y="632.00" font-size="8.6" fill="#8a4fc0" font-weight="bold" font-style="italic" textLength="6.00" lengthAdjust="spacingAndGlyphs">A</text>
<rect x="649.60" y="621.40" width="19.60" height="18.40" fill="#fdfdfd" stroke="#ababab" stroke-width="1"/>
<text x="653.60" y="632.00" font-size="8.6" fill="#8a4fc0" font-weight="bold" font-style="italic" textLength="6.00" lengthAdjust="spacingAndGlyphs">A</text>
<path d="M593 624.4v3.8M591.1 626.3h3.8M591.7 625l2.6 2.6M594.3 625l-2.6 2.6" fill="none" stroke="#e0a800" stroke-width="0.8"/>
<text x="598.00" y="637.00" font-size="9.4" fill="#2e6bb5" font-weight="bold" font-style="italic" textLength="6.60" lengthAdjust="spacingAndGlyphs">A</text>
<path d="M596.6 637.6h9.4" fill="none" stroke="#2e6bb5" stroke-width="1.1"/>
<path d="M624.4 635.4l4.4-5.4 1.2 1-4.4 5.4-1.6.4z" fill="#2e6bb5"/>
<circle cx="634" cy="632.8" r="2.5" fill="#fff" stroke="#444" stroke-width="1"/>
<path d="M632.2 634.8l-2.6 2.6" fill="none" stroke="#444" stroke-width="1.2"/>
<path d="M654.6 635.6l4.4-5.6 1.3 1-4.4 5.6-1.7.5z" fill="#2e6bb5"/>
<path d="M659.6 637l4.4-5.6 1.3 1-4.4 5.6-1.7.5z" fill="#2e6bb5"/>
<text x="739.00" y="634.50" font-size="9.4" fill="#2b579a" font-family='"DejaVu Sans Condensed","DejaVu Sans","Liberation Sans",sans-serif' textLength="39.00" lengthAdjust="spacingAndGlyphs">Options...</text>
<filter id="sh" x="-5%" y="-5%" width="112%" height="115%"><feGaussianBlur stdDeviation="1.6"/></filter>
<rect x="537.00" y="383.00" width="227.40" height="119.00" fill="#000" opacity="0.28" filter="url(#sh)"/>
<rect x="534.80" y="380.40" width="227.40" height="119.00" fill="#fbfbfb" stroke="#c3c3c3" stroke-width="1"/>
<text x="563.80" y="394.00" font-size="11.4" fill="#464646" textLength="177.80" lengthAdjust="spacingAndGlyphs">Update Heading 1 to Match Selection</text>
<rect x="535.90" y="400.80" width="224.90" height="17.90" fill="#d3e0f3" stroke="#9db7dd" stroke-width="1"/>
<text x="563.80" y="414.30" font-size="11.4" fill="#464646" textLength="39.20" lengthAdjust="spacingAndGlyphs">Modify...</text>
<path d="M563.80 415.80H573.00" fill="none" stroke="#464646" stroke-width="0.8"/>
<text x="563.80" y="434.50" font-size="11.4" fill="#464646" textLength="95.50" lengthAdjust="spacingAndGlyphs">Select All: (No Data)</text>
<path d="M563.80 436.00H569.40" fill="none" stroke="#464646" stroke-width="0.8"/>
<text x="563.80" y="453.80" font-size="11.4" fill="#464646" textLength="105.70" lengthAdjust="spacingAndGlyphs">Remove All: (No Data)</text>
<path d="M563.80 455.30H570.80" fill="none" stroke="#464646" stroke-width="0.8"/>
<text x="563.80" y="473.00" font-size="11.4" fill="#a6a6a6" textLength="89.00" lengthAdjust="spacingAndGlyphs">Delete Heading 1...</text>
<path d="M563.80 474.50H571.40" fill="none" stroke="#a6a6a6" stroke-width="0.8"/>
<path d="M563.40 480.20H760.60" fill="none" stroke="#dcdcdc" stroke-width="1"/>
<text x="563.80" y="493.70" font-size="11.4" fill="#464646" textLength="125.20" lengthAdjust="spacingAndGlyphs">Remove from Style Gallery</text>
<path d="M658.60 495.20H666.60" fill="none" stroke="#464646" stroke-width="0.8"/>
<text x="540.30" y="413.80" font-size="13.6" fill="#3c3c3c" font-style="italic" textLength="9.40" lengthAdjust="spacingAndGlyphs">A</text>
<path d="M540.4 414.2h12" fill="none" stroke="#5b8fd0" stroke-width="0.7"/>
<path d="M544.9 416l7.5-8.3" fill="none" stroke="#2e6bb5" stroke-width="1.5"/>
<path d="M73.20 256.90H470.10Q472.30 256.90 472.30 259.10V308.40Q472.30 310.60 470.10 310.60H73.20Q71.00 310.60 71.00 308.40V259.10Q71.00 256.90 73.20 256.90Z M76.00 261.90V305.60H467.30V261.90Z" fill="#d40000" fill-rule="evenodd"/>
<path d="M524.40 392.90H768.10Q770.30 392.90 770.30 395.10V425.30Q770.30 427.50 768.10 427.50H524.40Q522.20 427.50 522.20 425.30V395.10Q522.20 392.90 524.40 392.90Z M527.10 397.80V422.60H765.40V397.80Z" fill="#d40000" fill-rule="evenodd"/>
<path d="M472.2 287.3L573.1 293.4L548.1 306.9L575.6 315.6L573.1 324L545 316.3L557.5 340.6z" fill="#ed1c24"/>
<path d="M523 414.2L422.2 401L443.1 419.4L387.5 425.7L388 434.7L445.4 429L428 450.4z" fill="#ed1c24"/>
</svg>
</body></html>
